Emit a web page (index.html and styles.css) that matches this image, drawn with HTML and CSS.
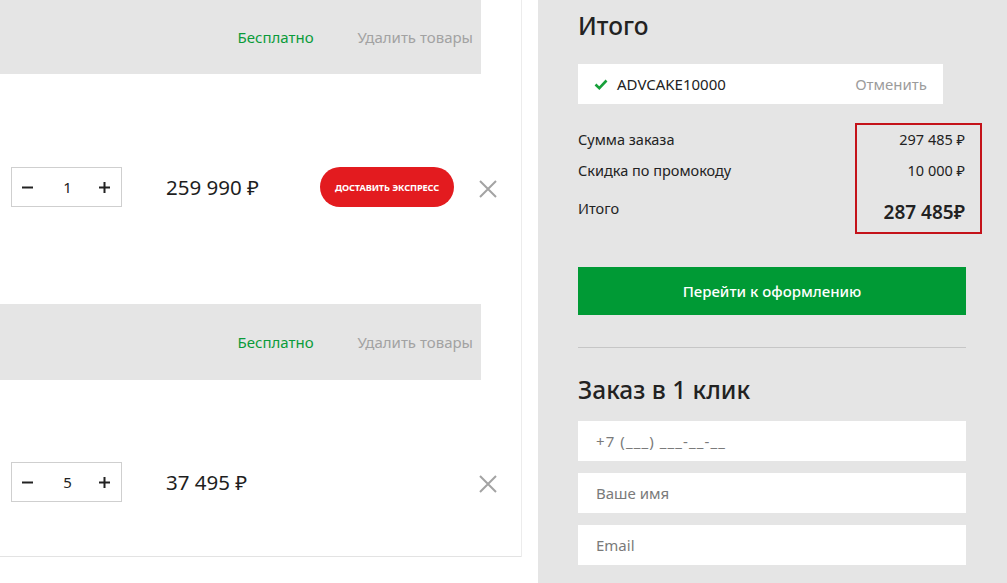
FILE: index.html
```html
<!DOCTYPE html>
<html lang="ru">
<head>
<meta charset="utf-8">
<title>Корзина</title>
<link rel="stylesheet" href="styles.css">
</head>
<body>
<div class="page">
  <section class="cart">
    <div class="group-head">
      <span class="free">Бесплатно</span>
      <span class="remove-all">Удалить товары</span>
    </div>
    <div class="item item-first">
      <div class="qty">
        <button class="qty-btn" aria-label="Меньше"><svg width="11" height="11" viewBox="0 0 11 11"><path d="M0 5.5h11" stroke="#222" stroke-width="2"/></svg></button>
        <span class="qty-val">1</span>
        <button class="qty-btn" aria-label="Больше"><svg width="11" height="11" viewBox="0 0 11 11"><path d="M0 5.5h11M5.5 0v11" stroke="#222" stroke-width="2"/></svg></button>
      </div>
      <div class="price">259 990 ₽</div>
      <button class="express">ДОСТАВИТЬ ЭКСПРЕСС</button>
      <button class="remove" aria-label="Удалить"><svg width="18" height="18" viewBox="0 0 18 18"><path d="M1 1l16 16M17 1L1 17" stroke="#a3a3a3" stroke-width="2"/></svg></button>
    </div>
    <div class="group-head group-head-2">
      <span class="free">Бесплатно</span>
      <span class="remove-all">Удалить товары</span>
    </div>
    <div class="item item-second">
      <div class="qty">
        <button class="qty-btn" aria-label="Меньше"><svg width="11" height="11" viewBox="0 0 11 11"><path d="M0 5.5h11" stroke="#222" stroke-width="2"/></svg></button>
        <span class="qty-val">5</span>
        <button class="qty-btn" aria-label="Больше"><svg width="11" height="11" viewBox="0 0 11 11"><path d="M0 5.5h11M5.5 0v11" stroke="#222" stroke-width="2"/></svg></button>
      </div>
      <div class="price">37 495 ₽</div>
      <button class="remove" aria-label="Удалить"><svg width="18" height="18" viewBox="0 0 18 18"><path d="M1 1l16 16M17 1L1 17" stroke="#a3a3a3" stroke-width="2"/></svg></button>
    </div>
  </section>

  <aside class="summary">
    <h2 class="title">Итого</h2>
    <div class="promo">
      <svg class="check" width="14" height="11" viewBox="0 0 14 11"><path d="M1.5 5.5l3.8 3.6L12.5 1.5" fill="none" stroke="#17a03a" stroke-width="2.6"/></svg>
      <span class="promo-code">ADVCAKE10000</span>
      <span class="promo-cancel">Отменить</span>
    </div>
    <div class="totals">
      <div class="row"><span>Сумма заказа</span><span>297 485 ₽</span></div>
      <div class="row row-discount"><span>Скидка по промокоду</span><span>10 000 ₽</span></div>
      <div class="row row-total"><span>Итого</span><span class="total-value">287 485₽</span></div>
      <div class="highlight"></div>
    </div>
    <button class="checkout">Перейти к оформлению</button>
    <hr class="divider">
    <h2 class="title title-oneclick">Заказ в 1 клик</h2>
    <div class="form">
      <div class="field field-phone">+7 (___) ___-__-__</div>
      <div class="field">Ваше имя</div>
      <div class="field">Email</div>
    </div>
  </aside>
</div>
</body>
</html>
```

FILE: styles.css
```css
* { box-sizing: border-box; }

html, body {
  margin: 0;
  padding: 0;
  background: #fff;
  font-family: "Noto Sans", "Open Sans", sans-serif;
  color: #222;
}

.page {
  display: flex;
  align-items: flex-start;
  min-height: 583px;
  overflow: hidden;
}

button {
  font-family: inherit;
  border: 0;
  background: none;
  padding: 0;
  cursor: pointer;
}

/* ---------- cart ---------- */
.cart {
  width: 522px;
  flex: none;
  border-right: 1px solid #ececec;
  display: flex;
  flex-direction: column;
}

.group-head {
  width: 481px;
  height: 74px;
  background: #e5e5e5;
  display: flex;
  align-items: center;
  justify-content: flex-end;
  gap: 44px;
  padding-right: 8px;
  font-size: 15px;
}
.group-head-2 { height: 76px; }

.free { color: #0a9b3a; }
.remove-all { color: #a2a2a2; }

.item {
  display: flex;
  align-items: center;
  padding-left: 11px;
  padding-right: 24px;
}
.item-first { padding-top: 93px; padding-bottom: 97px; }
.item-second {
  padding-top: 82px;
  padding-bottom: 54px;
  border-bottom: 1px solid #e3e3e3;
}

.qty {
  width: 111px;
  height: 40px;
  border: 1px solid #cfcfcf;
  display: flex;
  align-items: center;
  justify-content: space-between;
  padding: 0 11px 0 10px;
}
.qty-btn {
  width: 11px;
  height: 11px;
  display: flex;
}
.qty-val {
  font-size: 15px;
  line-height: 1;
  margin-left: 3px;
}

.price {
  margin-left: 44px;
  width: 154px;
  font-size: 20.5px;
  color: #1e1e1e;
}

.express {
  width: 134px;
  height: 40px;
  border-radius: 20px;
  background: #e31b1f;
  color: #fff;
  font-size: 9.2px;
  font-weight: 700;
  letter-spacing: -0.1px;
}

.remove {
  margin-left: auto;
  margin-top: 4px;
  width: 18px;
  height: 18px;
  display: flex;
}

/* ---------- summary ---------- */
.summary {
  margin-left: 16px;
  width: 469px;
  flex: none;
  min-height: 583px;
  background: #e5e5e5;
  padding: 11px 41px 20px 40px;
}

.title {
  margin: 0;
  font-size: 24.5px;
  line-height: 30px;
  font-weight: 500;
  color: #222;
}

.promo {
  margin-top: 23px;
  width: 365px;
  height: 40px;
  background: #fff;
  display: flex;
  align-items: center;
  padding: 0 16px;
  font-size: 15px;
}
.check { flex: none; }
.promo-code { margin-left: 9px; color: #222; }
.promo-cancel { margin-left: auto; color: #9c9c9c; }

.totals {
  position: relative;
  margin-top: 25px;
  font-size: 14.5px;
}
.row {
  display: flex;
  justify-content: space-between;
  align-items: flex-start;
  line-height: 20px;
  padding-right: 1px;
}
.row-discount { margin-top: 11px; }
.row-total { margin-top: 18px; }
.total-value {
  font-size: 19px;
  font-weight: 600;
  line-height: 28px;
}

.highlight {
  position: absolute;
  left: 277px;
  top: -6px;
  width: 127px;
  height: 111px;
  border: 2px solid #c4121a;
}

.checkout {
  display: block;
  margin-top: 41px;
  width: 388px;
  height: 48px;
  background: #009a35;
  color: #fff;
  font-size: 15px;
  font-weight: 500;
}

.divider {
  margin: 32px 0 0;
  border: 0;
  border-top: 1px solid #c6c6c6;
  width: 388px;
}

.title-oneclick { margin-top: 27px; }

.form {
  margin-top: 16px;
  display: flex;
  flex-direction: column;
  gap: 12px;
}
.field {
  width: 388px;
  height: 40px;
  background: #fff;
  display: flex;
  align-items: center;
  padding-left: 18px;
  font-size: 15px;
  color: #7a7a7a;
}
.field-phone { letter-spacing: 1.1px; }
```
